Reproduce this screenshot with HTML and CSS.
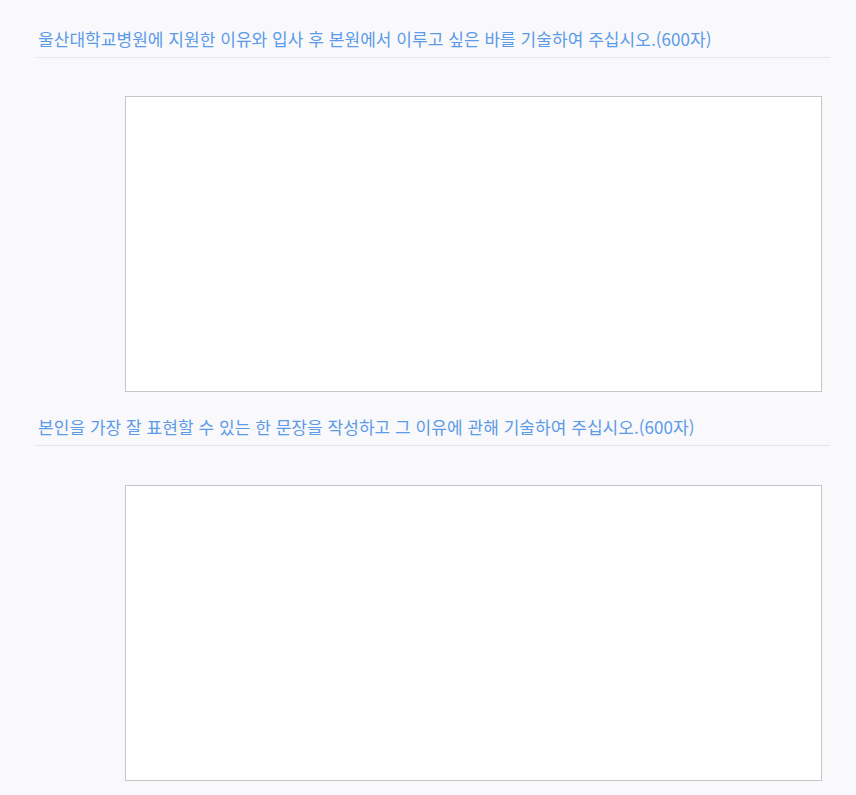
FILE: index.html
```html
<!DOCTYPE html>
<html lang="ko">
<head>
<meta charset="utf-8">
<link rel="stylesheet" href="styles.css">
</head>
<body>
<div class="form">
  <div class="question first">
    <div class="q-title">울산대학교병원에 지원한 이유와 입사 후 본원에서 이루고 싶은 바를 기술하여 주십시오.(600자)</div>
    <textarea class="answer"></textarea>
  </div>
  <div class="question">
    <div class="q-title">본인을 가장 잘 표현할 수 있는 한 문장을 작성하고 그 이유에 관해 기술하여 주십시오.(600자)</div>
    <textarea class="answer"></textarea>
  </div>
</div>
</body>
</html>
```
FILE: styles.css
```css
html, body {
  margin: 0;
  padding: 0;
  background: #f9f8fb;
}
.form {
  padding-left: 35px;
  width: 795px;
  font-family: "Noto Sans CJK KR", "Noto Sans", sans-serif;
}
.question {
  display: flex;
  flex-direction: column;
}
.q-title {
  padding: 24px 0 7px 3px;
  line-height: 22px;
  font-size: 17px;
  letter-spacing: 0.05px;
  color: #5b9be8;
  border-bottom: 1px solid #e7e6eb;
}
.question.first .q-title {
  padding-top: 28px;
}
.answer {
  display: block;
  box-sizing: border-box;
  margin: 39px 0 0 90px;
  width: 697px;
  height: 296px;
  border: 1px solid #c6c6c9;
  background: #ffffff;
  resize: none;
  padding: 0;
  outline: none;
}
.question.first .answer {
  margin-top: 38px;
}
```
